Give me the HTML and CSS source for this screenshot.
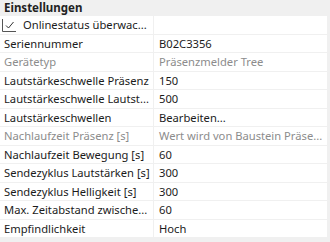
FILE: index.html
```html
<!DOCTYPE html>
<html lang="de">
<head>
<meta charset="utf-8">
<link rel="stylesheet" href="styles.css">
</head>
<body>
<div class="panel">
  <div class="header">Einstellungen</div>
  <div class="grid">
    <div class="label check-label"><svg class="check" width="16" height="14" viewBox="0 0 16 14"><path d="M0.5 1 V13.5 H14" fill="none" stroke="#555" stroke-width="1"/><path d="M4 7.5 L6.5 10 L11.5 4" fill="none" stroke="#333" stroke-width="1"/></svg><span>Onlinestatus überwac...</span></div>
    <div class="value"></div>

    <div class="label">Seriennummer</div>
    <div class="value">B02C3356</div>

    <div class="label dis">Gerätetyp</div>
    <div class="value dis">Präsenzmelder Tree</div>

    <div class="label">Lautstärkeschwelle Präsenz</div>
    <div class="value">150</div>

    <div class="label">Lautstärkeschwelle Lautst...</div>
    <div class="value">500</div>

    <div class="label">Lautstärkeschwellen</div>
    <div class="value">Bearbeiten...</div>

    <div class="label dis">Nachlaufzeit Präsenz [s]</div>
    <div class="value dis">Wert wird von Baustein Präse...</div>

    <div class="label">Nachlaufzeit Bewegung [s]</div>
    <div class="value">60</div>

    <div class="label">Sendezyklus Lautstärken [s]</div>
    <div class="value">300</div>

    <div class="label">Sendezyklus Helligkeit [s]</div>
    <div class="value">300</div>

    <div class="label">Max. Zeitabstand zwische...</div>
    <div class="value">60</div>

    <div class="label">Empfindlichkeit</div>
    <div class="value">Hoch</div>
  </div>
</div>
</body>
</html>
```
FILE: styles.css
```css
html, body {
  margin: 0;
  padding: 0;
  background: #f0f0f0;
}
body {
  font-family: "Noto Sans", "Open Sans", sans-serif;
  font-size: 11.2px;
  color: #1b1b1b;
  width: 330px;
  height: 242px;
  overflow: hidden;
}
.panel {
  width: 327px;
}
.header {
  height: 16px;
  line-height: 15px;
  padding-left: 4px;
  font-weight: bold;
  font-size: 11.5px;
  color: #222;
}
.grid {
  display: grid;
  grid-template-columns: 154px 1fr;
  grid-auto-rows: 18.5px;
  background: #fff;
}
.label, .value {
  display: flex;
  align-items: center;
  white-space: nowrap;
  overflow: hidden;
  border-bottom: 1px solid #f0f0f0;
  box-sizing: border-box;
}
.label {
  padding-left: 4px;
  border-right: 1px solid #f0f0f0;
}
.value {
  padding-left: 5px;
}
.dis {
  color: #8c8c8c;
}
.check-label {
  padding-left: 2px;
}
.check {
  flex: none;
  margin-right: 5px;
  margin-top: 1px;
}
```
